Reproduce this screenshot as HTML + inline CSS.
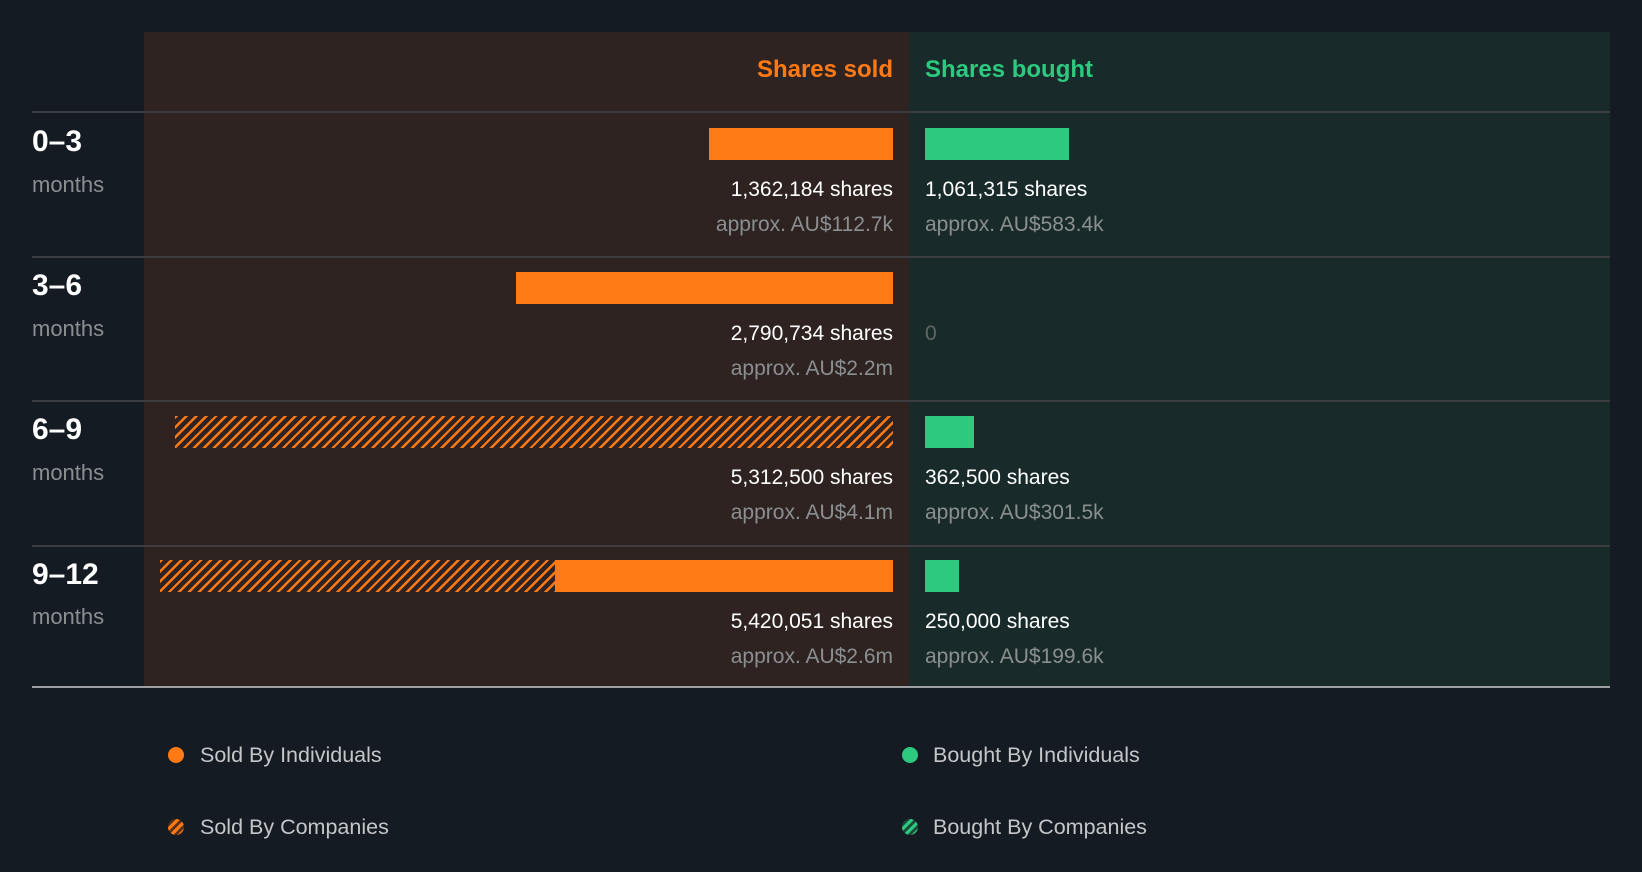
<!DOCTYPE html>
<html><head><meta charset="utf-8"><style>
*{margin:0;padding:0;box-sizing:border-box}
body{width:1642px;height:872px;background:#141b23;font-family:"Liberation Sans",sans-serif;position:relative;overflow:hidden}
.a{position:absolute}
.sold{left:144px;top:32px;width:765px;height:655px;background:#2e2321}
.bought{left:909px;top:32px;width:701px;height:655px;background:#182b2a}
.line{left:32px;width:1578px;height:2px;background:#3b3d40}
.o{background:#ff7a15}
.g{background:#2dc97e}
.h{background:repeating-linear-gradient(135deg,#ff7a15 0 2.4px,transparent 2.4px 7px)}
.t{font-size:21px;line-height:24px;white-space:nowrap}
.r{text-align:right;right:749px}
.l{left:925px}
.w{color:#fff}
.gr{color:#8b8f91}
.lab{left:32px;font-size:30px;font-weight:bold;color:#fff;line-height:32px}
.mo{left:32px;font-size:22px;color:#8b8f91;line-height:24px}
.leg{font-size:21.5px;color:#c4c6c8;line-height:24px}
.dot{width:16px;height:16px;border-radius:50%}
</style></head><body>
<div class="a sold"></div><div class="a bought"></div>
<div class="a t" style="right:749px;top:56px;font-size:24px;font-weight:bold;color:#ff7a15;line-height:28px">Shares sold</div>
<div class="a t" style="left:925px;top:56px;font-size:24px;font-weight:bold;color:#2dc97e;line-height:28px">Shares bought</div>
<div class="a line" style="top:111px"></div>
<div class="a line" style="top:256px"></div>
<div class="a line" style="top:400px"></div>
<div class="a line" style="top:545px"></div>
<div class="a" style="left:32px;top:686px;width:1578px;height:2px;background:#9da1a4"></div>

<!-- row 0 -->
<div class="a lab" style="top:126px">0–3</div><div class="a mo" style="top:173px">months</div>
<div class="a o" style="left:709px;top:128px;width:184px;height:32px"></div>
<div class="a g" style="left:925px;top:128px;width:144px;height:32px"></div>
<div class="a t w r" style="top:178px">1,362,184 shares</div>
<div class="a t gr r" style="top:213px">approx. AU$112.7k</div>
<div class="a t w l" style="top:178px">1,061,315 shares</div>
<div class="a t gr l" style="top:213px">approx. AU$583.4k</div>

<!-- row 1 -->
<div class="a lab" style="top:270px">3–6</div><div class="a mo" style="top:317px">months</div>
<div class="a o" style="left:516px;top:272px;width:377px;height:32px"></div>
<div class="a t w r" style="top:322px">2,790,734 shares</div>
<div class="a t gr r" style="top:357px">approx. AU$2.2m</div>
<div class="a t l" style="top:322px;color:#5d6766">0</div>

<!-- row 2 -->
<div class="a lab" style="top:414px">6–9</div><div class="a mo" style="top:461px">months</div>
<div class="a h" style="left:175px;top:416px;width:718px;height:32px"></div>
<div class="a g" style="left:925px;top:416px;width:49px;height:32px"></div>
<div class="a t w r" style="top:466px">5,312,500 shares</div>
<div class="a t gr r" style="top:501px">approx. AU$4.1m</div>
<div class="a t w l" style="top:466px">362,500 shares</div>
<div class="a t gr l" style="top:501px">approx. AU$301.5k</div>

<!-- row 3 -->
<div class="a lab" style="top:559px">9–12</div><div class="a mo" style="top:605px">months</div>
<div class="a h" style="left:160px;top:560px;width:395px;height:32px"></div>
<div class="a o" style="left:555px;top:560px;width:338px;height:32px"></div>
<div class="a g" style="left:925px;top:560px;width:34px;height:32px"></div>
<div class="a t w r" style="top:610px">5,420,051 shares</div>
<div class="a t gr r" style="top:645px">approx. AU$2.6m</div>
<div class="a t w l" style="top:610px">250,000 shares</div>
<div class="a t gr l" style="top:645px">approx. AU$199.6k</div>

<!-- legend -->
<div class="a dot o" style="left:168px;top:747px"></div>
<div class="a leg" style="left:200px;top:743px">Sold By Individuals</div>
<div class="a dot" style="left:168px;top:819px;background:repeating-linear-gradient(135deg,#ff7a15 0 3px,#5a3118 3px 6px)"></div>
<div class="a leg" style="left:200px;top:815px">Sold By Companies</div>
<div class="a dot g" style="left:902px;top:747px"></div>
<div class="a leg" style="left:933px;top:743px">Bought By Individuals</div>
<div class="a dot" style="left:902px;top:819px;background:repeating-linear-gradient(135deg,#2dc97e 0 3px,#1d4a3a 3px 6px)"></div>
<div class="a leg" style="left:933px;top:815px">Bought By Companies</div>
</body></html>
